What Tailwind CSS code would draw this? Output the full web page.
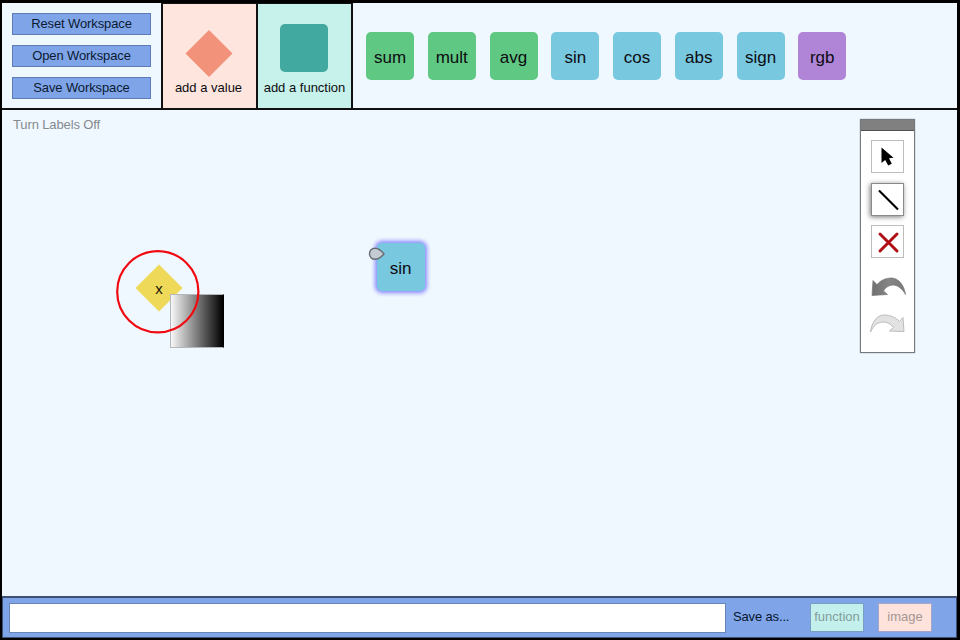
<!DOCTYPE html>
<html lang="en">
<head>
<meta charset="utf-8">
<title>Workspace</title>
<script src="https://cdn.jsdelivr.net/npm/@tailwindcss/browser@4"></script>
</head>
<body class="h-[640px] w-[960px] overflow-hidden bg-black pt-[3px] pr-[3px] pb-[2px] pl-[2px] font-['Liberation_Sans',Arial,sans-serif] text-[#0c0c10]">
<div class="flex h-[635px] w-[955px] flex-col bg-[#f0f8ff]">
  <header class="flex h-[107px] shrink-0 border-b-2 border-[#111]">
    <div class="flex w-[159px] flex-col gap-[10px] pt-[10px] pl-[10px] text-[13px] tracking-[-0.12px] text-[#0b1a33]">
      <button class="h-[22px] w-[139px] border border-[#5f7cb4] bg-[#7fa5e8] pb-px leading-[18px]">Reset Workspace</button>
      <button class="h-[22px] w-[139px] border border-[#5f7cb4] bg-[#7fa5e8] pb-px leading-[18px]">Open Workspace</button>
      <button class="h-[22px] w-[139px] border border-[#5f7cb4] bg-[#7fa5e8] pb-px leading-[18px]">Save Workspace</button>
    </div>
    <div class="flex w-[97px] flex-col items-center border-x-2 border-t border-[#111] bg-[#fee5de] pt-[26px] pr-[2px]">
      <svg class="h-[48px] w-[48px]" viewBox="0 0 48 48"><path d="M24 0 47.500 23.500 24 47 0.500 23.500Z" fill="#f3927b"/></svg>
      <span class="mt-[1px] text-[13px] leading-[18px] whitespace-nowrap">add a value</span>
    </div>
    <div class="flex w-[95px] flex-col items-center border-t border-r-2 border-[#111] bg-[#c7f1eb] pt-[20px]">
      <div class="mr-px h-[48px] w-[48px] rounded-[5px] bg-[#41a9a0]"></div>
      <span class="mt-[7px] text-[13px] leading-[18px] whitespace-nowrap">add a function</span>
    </div>
    <div class="flex gap-[13.75px] pt-[29px] pl-[13px] text-center text-[17px] leading-[52px]">
      <div class="h-[48px] w-[48px] rounded-[5px] bg-[#5fc883]">sum</div>
      <div class="h-[48px] w-[48px] rounded-[5px] bg-[#5fc883]">mult</div>
      <div class="h-[48px] w-[48px] rounded-[5px] bg-[#5fc883]">avg</div>
      <div class="h-[48px] w-[48px] rounded-[5px] bg-[#78c8e0]">sin</div>
      <div class="h-[48px] w-[48px] rounded-[5px] bg-[#78c8e0]">cos</div>
      <div class="h-[48px] w-[48px] rounded-[5px] bg-[#78c8e0]">abs</div>
      <div class="h-[48px] w-[48px] rounded-[5px] bg-[#78c8e0]">sign</div>
      <div class="h-[48px] w-[48px] rounded-[5px] bg-[#b085d8]">rgb</div>
    </div>
  </header>

  <main class="relative min-h-0 flex-1">
    <p class="pt-[6px] pl-[11px] text-[13px] leading-[18px] tracking-[-0.12px] text-[#858a8f]">Turn Labels Off</p>

    <!-- value node with its preview and connection ring -->
    <div class="absolute top-[154px] left-[133px] h-[48px] w-[48px] text-center text-[15px] leading-[49px] text-[#1a1808]">
      <svg class="absolute inset-0" width="48" height="48" viewBox="0 0 48 48"><path d="M24 0.500 47.500 24 24 47.500 0.500 24Z" fill="#eeda58"/></svg>
      <span class="relative">x</span>
    </div>
    <div class="absolute top-[184px] left-[168px] h-[54px] w-[54px] border border-[#b5b8bb] border-r-black bg-linear-to-r/srgb from-[#f8f8f8] to-black"></div>
    <svg class="absolute top-[138px] left-[112px]" width="88" height="88" viewBox="0 0 88 88"><circle cx="43.8" cy="43.7" r="40.6" fill="none" stroke="#f00a10" stroke-width="2.2"/></svg>

    <!-- function node -->
    <div class="absolute top-[133px] left-[374.5px] h-[48px] w-[48px] rounded-[5px] bg-[#78c8e0] text-center text-[17px] leading-[52px] shadow-[0_0_4px_2px_#8585ff]">sin</div>
    <svg class="absolute top-[136px] left-[366px]" width="18" height="15" viewBox="0 0 18 15"><path d="M16 8C13 4 10 2.2 7 2.2C3.7 2.2 1.5 4.6 1.5 7.7S3.8 13.3 7 13.3C10 13.3 13.3 11 16 8Z" fill="#c5cbd4" stroke="#656d73" stroke-width="1.4"/></svg>

    <!-- tool palette -->
    <aside class="absolute top-[9px] left-[858px] flex h-[234px] w-[55px] flex-col items-center border-[1.5px] border-t border-[#75797d] bg-white shadow-[0_0_1px_#777]">
      <div class="h-[11px] w-full border-b border-[#505050] bg-[#808080]"></div>
      <div class="mt-[9px] flex flex-col gap-[9.5px]">
        <div class="h-[33px] w-[33px] border border-[#bdbdbd]"><svg width="31" height="31" viewBox="0 0 31 31"><path d="M9.5 6.500V22L13.2 19L16.200 24.500L19.800 22.800L17 17.300L21.500 16.800Z" fill="#000"/></svg></div>
        <div class="h-[33px] w-[33px] border border-[#8a8a8a] bg-white shadow-[-1px_1px_5px_#777]"><svg width="31" height="31" viewBox="0 0 31 31"><path d="M7 6.500 26 25.500" stroke="#000" stroke-width="2.2"/></svg></div>
        <div class="h-[33px] w-[33px] border border-[#bdbdbd]"><svg width="31" height="31" viewBox="0 0 31 31"><path d="M8 8 25 25M25 8 8 25" stroke="#b01015" stroke-width="3" stroke-linecap="round"/></svg></div>
      </div>
      <svg class="mt-[17px]" width="38" height="60" viewBox="0 0 38 60">
        <defs><linearGradient id="undo"><stop stop-color="#707070"/><stop offset=".5" stop-color="#858585"/><stop offset="1" stop-color="#777"/></linearGradient></defs>
        <path d="M4 5.500 8 9.500C12 5 17 3 23 3C30 3.500 35 10 36.500 19.500C33 13 28 10 23.500 10C19 10.500 16 13 14.500 16L18.500 19.500 3 20.500Z" fill="url(#undo)" stroke="#777" stroke-width=".7"/>
        <path d="M1.500 57C2.500 47.500 8 40 15 40C21 40 27 42.500 30.500 46.500L34 42.500 35 56.500 20.500 56 24.500 52.500C22 49 18.500 47 14.500 47C8.500 47 4.500 50.500 1.500 57Z" fill="#e2e2e2" stroke="#bcbcbc" stroke-width="1"/>
      </svg>
    </aside>
  </main>

  <footer class="flex h-[42px] shrink-0 items-start border border-t-2 border-[#3c5275] bg-[#7fa5e8] pt-[5px] pl-[6px] text-[13px]">
    <div class="h-[30px] w-[717px] border border-[#6886b4] bg-white"></div>
    <span class="ml-[7px] w-[77px] pt-[5px] leading-[17px] tracking-[-0.15px] text-[#07152f]">Save as...</span>
    <button class="h-[29px] w-[54px] border border-[#789ec4] bg-[#c3f0ec] pb-px leading-[26px] text-[#849d9b]">function</button>
    <button class="ml-[14px] h-[29px] w-[54px] border border-[#a6a6cb] bg-[#fee3dd] pb-px leading-[26px] text-[#a59692]">image</button>
  </footer>
</div>
</body>
</html>
